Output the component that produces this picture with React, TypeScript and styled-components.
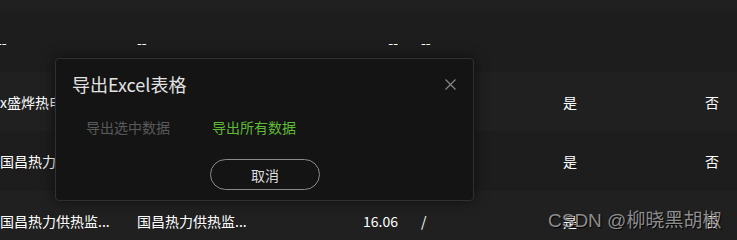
import React from "react";
import styled, { createGlobalStyle } from "styled-components";

const Global = createGlobalStyle`
  html, body { margin: 0; padding: 0; background: #1e1e1e; }
  body { font-family: "Noto Sans CJK SC", "Noto Sans", sans-serif; overflow: hidden; }
`;

const Page = styled.div`
  position: relative;
  width: 737px;
  height: 240px;
  overflow: hidden;
  background: #1f1f1f;
`;

const TopStrip = styled.div`
  height: 12px;
  background: #202020;
`;

const Row = styled.div<{ $alt?: boolean; $h: number }>`
  display: grid;
  grid-template-columns: 137px 137px 124px 165px 142px 32px;
  align-items: center;
  height: ${(p) => p.$h}px;
  background: ${(p) => (p.$alt ? "#202020" : "#1d1d1d")};
  color: #ffffff;
  font-size: 14px;
  line-height: 20px;
`;

const Cell = styled.div<{ $align?: "left" | "right"; $pad?: number; $shift?: number }>`
  text-align: ${(p) => p.$align || "left"};
  padding-left: ${(p) => p.$pad || 0}px;
  margin-left: ${(p) => p.$shift || 0}px;
  white-space: nowrap;
  overflow: hidden;
`;

const Modal = styled.div`
  position: absolute;
  left: 55px;
  top: 58px;
  width: 419px;
  height: 143px;
  box-sizing: border-box;
  background: #141414;
  border: 1px solid #303030;
  border-radius: 4px;
  box-shadow: 0 0 14px rgba(0, 0, 0, 0.55);
  display: flex;
  flex-direction: column;
  align-items: stretch;
`;

const Header = styled.div`
  display: flex;
  align-items: center;
  justify-content: space-between;
  padding: 13px 17px 0 16px;
  height: 24px;
`;

const Title = styled.div`
  font-size: 18px;
  line-height: 24px;
  color: #e2e2e2;
`;

const Close = styled.button`
  background: none;
  border: none;
  padding: 0;
  width: 12px;
  height: 12px;
  display: flex;
  align-items: center;
  justify-content: center;
  cursor: pointer;
`;

const Options = styled.div`
  display: flex;
  gap: 42px;
  margin-top: 21px;
  padding-left: 30px;
`;

const Option = styled.div<{ $active?: boolean }>`
  font-size: 14px;
  line-height: 20px;
  color: ${(p) => (p.$active ? "#5fba36" : "#5a5a5a")};
  cursor: pointer;
`;

const Footer = styled.div`
  display: flex;
  justify-content: center;
  margin-top: 22px;
`;

const CancelButton = styled.button`
  width: 110px;
  height: 31px;
  box-sizing: border-box;
  border: 1px solid #8a8a8a;
  border-radius: 16px;
  background: transparent;
  color: #dcdcdc;
  font-family: "Noto Sans CJK SC", "Noto Sans", sans-serif;
  font-size: 14px;
  padding: 0;
  margin-left: 1px;
`;

const Watermark = styled.div`
  position: absolute;
  left: 548px;
  top: 208px;
  font-family: "Liberation Sans", "Noto Sans CJK SC", sans-serif;
  font-size: 19px;
  line-height: 26px;
  color: rgba(190, 190, 190, 0.72);
  text-shadow: 1px 1px 1px rgba(0, 0, 0, 0.9);
  white-space: nowrap;
`;

type RowData = {
  h: number;
  alt?: boolean;
  c1: string;
  shift?: number;
  c2: string;
  c3: string;
  c4: string;
  c5: string;
  c6: string;
};

const rows: RowData[] = [
  { h: 60, c1: "--", shift: -3, c2: "--", c3: "--", c4: "--", c5: "", c6: "" },
  { h: 59, alt: true, c1: "xx盛烨热电...", shift: -7, c2: "", c3: "", c4: "", c5: "是", c6: "否" },
  { h: 60, c1: "国昌热力供热监...", c2: "", c3: "", c4: "", c5: "是", c6: "否" },
  { h: 60, alt: true, c1: "国昌热力供热监...", c2: "国昌热力供热监...", c3: "16.06", c4: "/", c5: "是", c6: "否" },
];

export default function App() {
  return (
    <Page>
      <Global />
      <TopStrip />
      {rows.map((r, i) => (
        <Row key={i} $h={r.h} $alt={r.alt}>
          <Cell $shift={r.shift}>{r.c1}</Cell>
          <Cell>{r.c2}</Cell>
          <Cell $align="right">{r.c3}</Cell>
          <Cell $pad={23}>{r.c4}</Cell>
          <Cell>{r.c5}</Cell>
          <Cell>{r.c6}</Cell>
        </Row>
      ))}
      <Modal>
        <Header>
          <Title>导出Excel表格</Title>
          <Close aria-label="close">
            <svg width="11" height="11" viewBox="0 0 11 11">
              <path d="M0.5 0.5 L10.5 10.5 M10.5 0.5 L0.5 10.5" stroke="#8a8a8a" strokeWidth="1.1" />
            </svg>
          </Close>
        </Header>
        <Options>
          <Option>导出选中数据</Option>
          <Option $active>导出所有数据</Option>
        </Options>
        <Footer>
          <CancelButton>取消</CancelButton>
        </Footer>
      </Modal>
      <Watermark>CSDN @柳晓黑胡椒</Watermark>
    </Page>
  );
}
